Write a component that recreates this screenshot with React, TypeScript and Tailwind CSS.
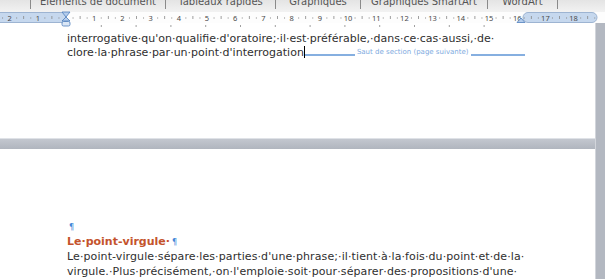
const tabs = [
  { label: "Éléments de document", w: "w-[135px]" },
  { label: "Tableaux rapides", w: "w-[110px]" },
  { label: "Graphiques", w: "w-[85px]" },
  { label: "Graphiques SmartArt", w: "w-[127px]" },
  { label: "WordArt", w: "w-[71px]" },
];

const CM = 28.2;
const ORIGIN = 66;

function Ruler() {
  const marks: JSX.Element[] = [];
  for (let k = -3; k <= 19; k++) {
    const x = ORIGIN + k * CM;
    if (k !== 0 && k >= -2 && k <= 18) {
      marks.push(
        <text key={"n" + k} x={x} y={8.5} fontSize={7.5} textAnchor="middle" fill="#4a4a4a">
          {Math.abs(k)}
        </text>
      );
    }
    marks.push(<rect key={"a" + k} x={x + CM * 0.25 - 0.5} y={5.5} width={1} height={1} fill="#888" />);
    marks.push(<rect key={"b" + k} x={x + CM * 0.5 - 0.4} y={4} width={0.8} height={3} fill="#888" />);
    marks.push(<rect key={"c" + k} x={x + CM * 0.75 - 0.5} y={5.5} width={1} height={1} fill="#888" />);
  }
  return (
    <svg width="605" height="11" viewBox="0 0 605 11" className="block overflow-visible">
      <rect x="0" y="0" width="605" height="11" fill="#fdfdfd" />
      <rect x="-4" y="0.5" width="70" height="10" fill="#c6d8ee" stroke="#9db4d2" />
      <rect x="523" y="0.5" width="74" height="10" rx="5" fill="#c6d8ee" stroke="#9db4d2" />
      {marks}
      <polygon points="62,0 70,0 66,5" fill="#b5cdec" stroke="#4f7fbd" strokeWidth="0.8" />
      <polygon points="66,5 62,9 70,9" fill="#b5cdec" stroke="#4f7fbd" strokeWidth="0.8" />
      <rect x="62" y="9.5" width="8" height="4.5" rx="1.5" fill="#dbe7f6" stroke="#4f7fbd" strokeWidth="0.8" />
      <polygon points="521,6 517,10.5 525,10.5" fill="#b5cdec" stroke="#4f7fbd" strokeWidth="0.8" />
    </svg>
  );
}

function TabStops() {
  const xs: number[] = [];
  for (let i = 1; i <= 12; i++) xs.push(ORIGIN + i * 34.8);
  return (
    <svg width="595" height="6" className="block">
      {xs.map((x) => (
        <rect key={x} x={x} y={2} width={1} height={2} fill="#a0a0a0" />
      ))}
    </svg>
  );
}

export default function App() {
  const body = "font-['DejaVu_Sans',sans-serif] text-[11px] leading-[13.5px] text-[#2f2f2f] whitespace-nowrap";
  return (
    <div className="w-[605px] h-[279px] overflow-hidden bg-[#b9bec7] flex flex-col">
      <div className="h-[12px] flex bg-gradient-to-b from-[#e4e4e4] to-[#f2f2f2] overflow-hidden">
        <div className="w-[30px]" />
        {tabs.map((t, i) => (
          <div
            key={t.label}
            className={`${t.w} h-[9px] border-l border-[#8a8a8a] ${i === tabs.length - 1 ? "border-r" : ""} flex justify-center overflow-hidden`}
          >
            <span className="font-['DejaVu_Sans',sans-serif] text-[10px] leading-[10px] text-[#555] mt-[-3px] whitespace-nowrap">
              {t.label}
            </span>
          </div>
        ))}
      </div>
      <div className="h-[11px] relative z-10">
        <Ruler />
      </div>
      <div className="flex flex-1">
        <div className="w-[595px] flex flex-col">
          <div className="h-[115px] bg-white">
            <TabStops />
            <div className={`pl-[67px] pt-[3px] ${body}`}>
              <div>interrogative·qu'on·qualifie·d'oratoire;·il·est·préférable,·dans·ce·cas·aussi,·de·</div>
              <div className="flex items-center">
                <span>clore·la·phrase·par·un·point·d'interrogation</span>
                <span className="w-[1px] h-[12px] bg-black" />
                <span className="w-[50px] h-[2px] bg-[#86afe0] mt-[5px]" />
                <span className="font-['DejaVu_Sans',sans-serif] text-[7px] text-[#7eaae0] px-[2px]">
                  Saut de section (page suivante)
                </span>
                <span className="w-[54px] h-[2px] bg-[#86afe0] mt-[5px]" />
              </div>
            </div>
          </div>
          <div className="h-[11px] border-t border-[#dfe2e7] bg-gradient-to-b from-[#c3c7cf] to-[#b0b5be]" />
          <div className="flex-1 bg-white pl-[67px] pt-[73px]">
            <div className="font-['DejaVu_Sans',sans-serif] text-[8px] leading-[12px] text-[#3d86d8] pl-[2px]">¶</div>
            <div className="font-['DejaVu_Sans',sans-serif] text-[11px] leading-[15px] font-bold text-[#c4532c] whitespace-nowrap">
              Le·point-virgule·<span className="text-[8px] font-normal text-[#3d86d8] pl-[2px]">¶</span>
            </div>
            <div className={body + " leading-[14.5px] tracking-[0.1px]"}>
              <div>Le·point-virgule·sépare·les·parties·d'une·phrase;·il·tient·à·la·fois·du·point·et·de·la·</div>
              <div>virgule.·Plus·précisément,·on·l'emploie·soit·pour·séparer·des·propositions·d'une·</div>
            </div>
          </div>
        </div>
        <div className="flex-1 border-l border-[#d2d5db] bg-[#b3b8c1]" />
      </div>
    </div>
  );
}
